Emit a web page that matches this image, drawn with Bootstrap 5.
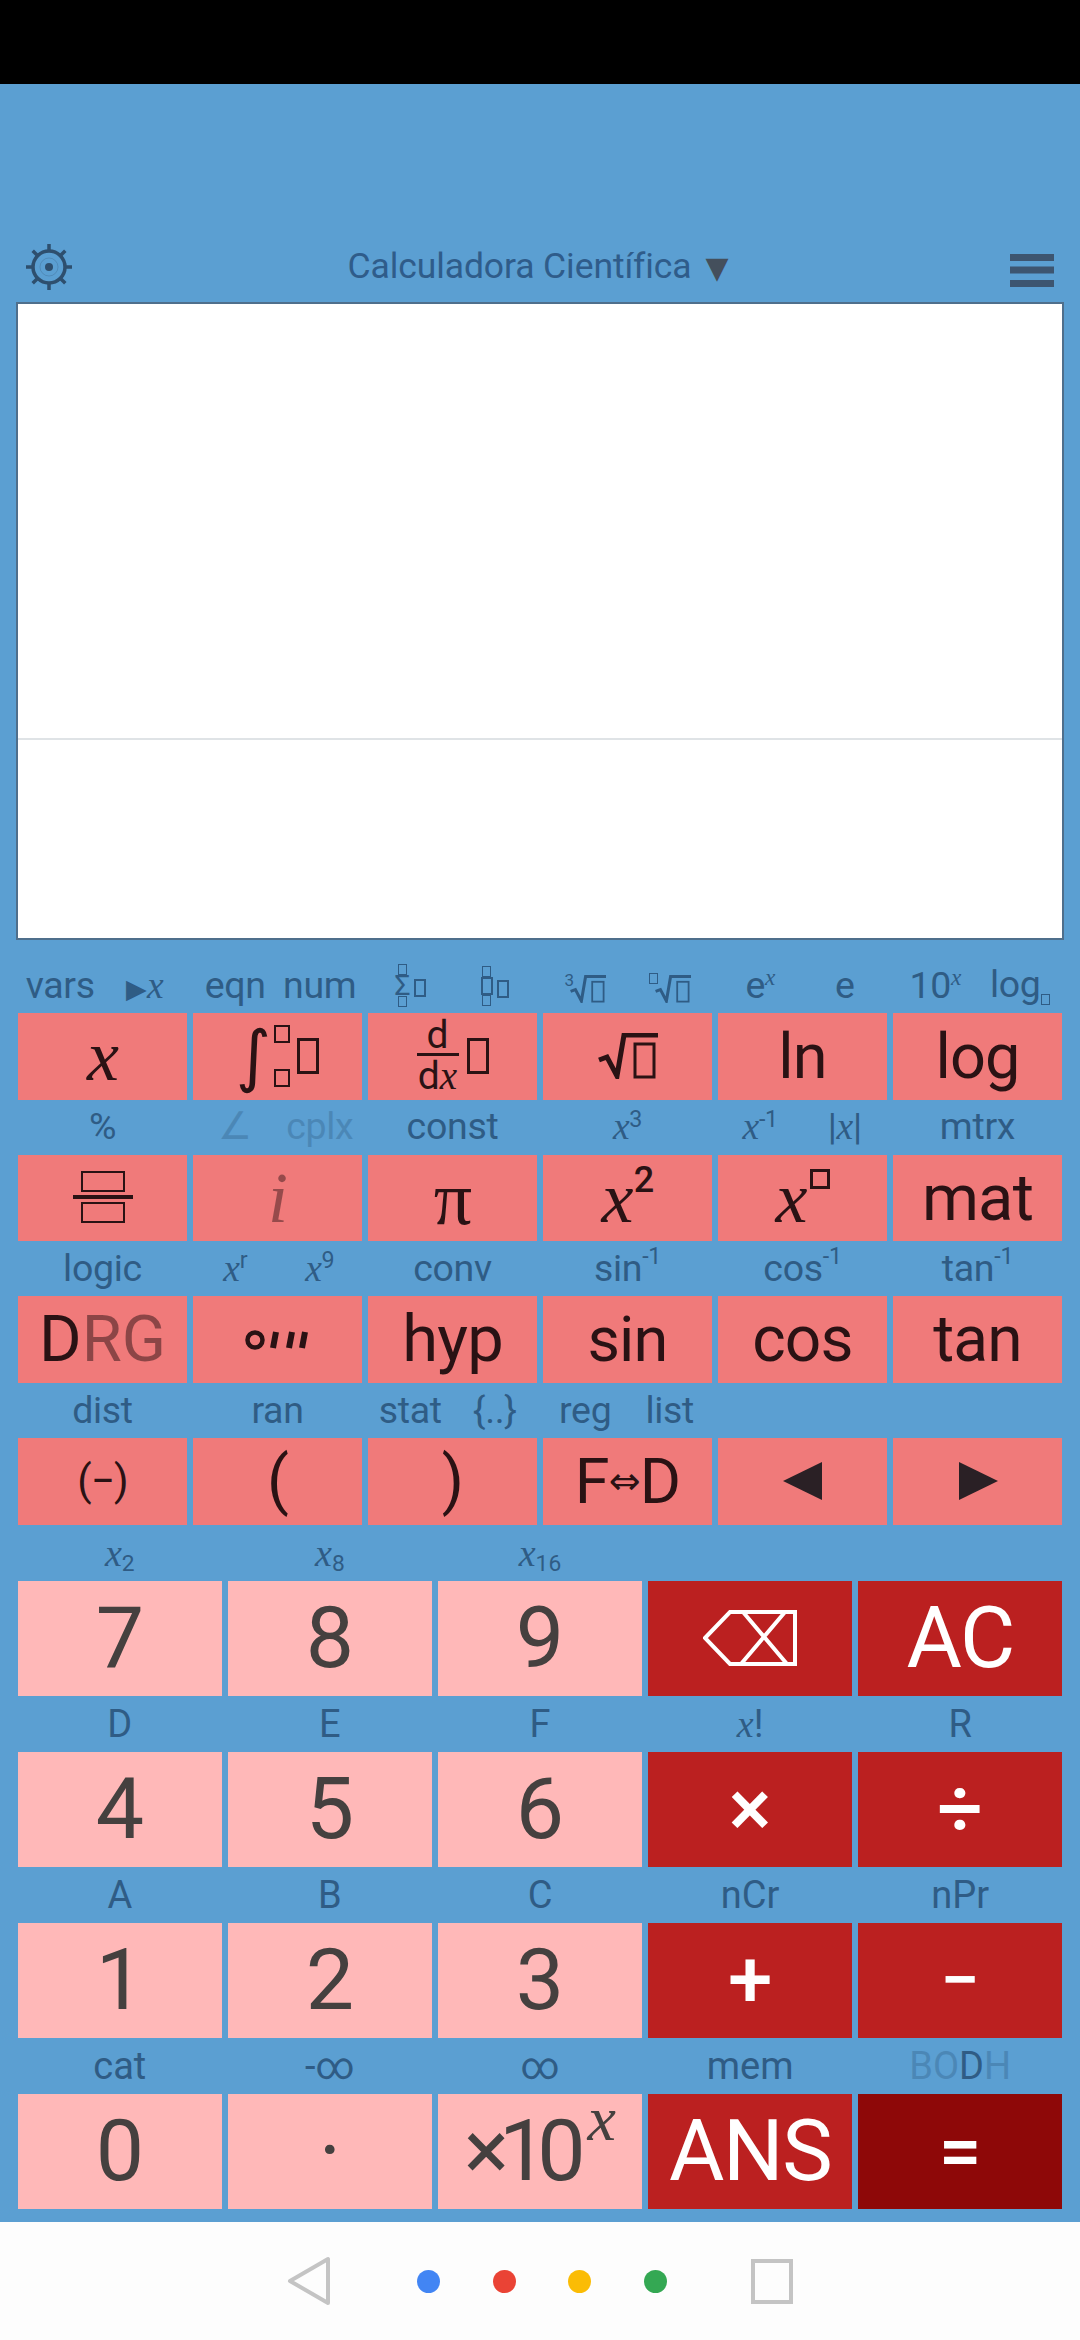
<!DOCTYPE html>
<html lang="es">
<head>
<meta charset="utf-8">
<title>Calculadora Científica</title>
<link rel="stylesheet" href="https://cdn.jsdelivr.net/npm/bootstrap@5.3.0/dist/css/bootstrap.min.css">
<style>
html,body{margin:0;height:2340px;background:#5b9fd2;font-family:Roboto,"Liberation Sans",sans-serif;overflow:hidden}
.app-shell{width:1080px;height:2340px}
.status-strip{height:84px;background:#000}
.blue-pane{height:2138px;background:#5b9fd2}
.head-row{height:218px;padding:0 26px 12px 26px}
.gear-ico{margin-bottom:0}
.menu-ico{margin-bottom:3px}
.app-title{color:#2f5c8a;font-size:35.5px;line-height:46px;margin:0 6px -1px 0;letter-spacing:-.1px}
.app-title b{color:#444f5c;font-weight:400;font-size:30px;font-family:"DejaVu Sans",sans-serif;margin-left:14px}
.screen{height:638px;margin:0 16px;background:#fff;border:2px solid #4f6f8c}
.screen-top{height:436px;border-bottom:2px solid #dfe3e6}
.pad-sci{margin:18px 18px 0;grid-template-columns:repeat(6,1fr);column-gap:6px}
.pad-num{margin:0 18px;grid-template-columns:repeat(5,1fr);column-gap:6.5px}
.cap-sci{height:55px;font-size:37.5px;line-height:1;color:#2f5c85;white-space:nowrap;letter-spacing:-.3px}
.cap-num{height:56px;font-size:38px;line-height:1;color:#2f5c85;white-space:nowrap}
.cap-sci span.half,.cap-num span.half{flex:1 1 0;text-align:center}
.dim{opacity:.35}
.serif-x{font-family:"Liberation Serif",serif;font-style:italic}
.cap-sci sup,.cap-num sup{font-size:.62em;top:-.55em;font-style:normal;font-family:Roboto,sans-serif}
.cap-sci sup.serif-x{font-family:"Liberation Serif",serif;font-style:italic}
.cap-num sub,.cap-sci sub{font-size:.6em;font-family:Roboto,sans-serif;font-style:normal}
.ckey{display:flex;align-items:center;justify-content:center;width:100%;border:0;border-radius:0;padding:0;line-height:1;white-space:nowrap}
.ckey:hover,.ckey:active{border:0}
.ck-fn{height:86.7px;background:#f07a7a;color:#2a1214;font-size:63px;letter-spacing:-.8px}
.ck-fn:hover,.ck-fn:active{background:#f07a7a;color:#2a1214}
.ck-dg{height:115px;background:#ffb8b8;color:#45403f;font-size:86px}
.ck-dg:hover,.ck-dg:active{background:#ffb8b8;color:#45403f}
.ck-op{height:115px;background:#bb2020;color:#fff;font-size:80px;font-weight:500}
.ck-op:hover,.ck-op:active{background:#bb2020;color:#fff}
.ck-eq{background:#8e0808}
.ck-eq:hover,.ck-eq:active{background:#8e0808}
.big-txt{font-size:85px;font-weight:400;letter-spacing:-1.5px}
.bx{display:inline-block;border:2px solid currentColor}
.bx-main{width:22px;height:36px;border-width:3px}
.bx-lab{width:12px;height:18px;vertical-align:-.05em}
.bx-sm{display:block;width:16px;height:18px;border:2px solid currentColor}
.bx-tiny{display:block;width:9px;height:11px;border:1.5px solid currentColor}
.stack{display:inline-flex;flex-direction:column;align-items:center;justify-content:center}
.stack-int{gap:26px;margin:0 7px 0 4px}
.int-sign{font-family:"DejaVu Sans",sans-serif;font-size:68px;line-height:1}
.frac-col{display:inline-flex;flex-direction:column;align-items:center;font-size:39px;line-height:.85;letter-spacing:0}
.frac-bar{width:42px;height:3px;background:currentColor;margin:1px 0 3px}
.frac-sym{width:60px;height:54px}
.frac-sym i{display:block;width:44px;height:21px;border:2px solid currentColor;margin:0 auto}
.frac-sym u{display:block;height:4px;background:currentColor;margin:3px 0 3px}
.nav-strip{height:118px;background:#fdfdfd}
.nav-dot{width:23px;height:23px;border-radius:50%}
.pow{font-size:36px;position:relative;top:-18px;font-family:Roboto,sans-serif;margin-left:1px;font-weight:500}
.tiny-sup{font-size:17px;position:relative;top:-12px;margin-right:-4px;font-family:Roboto,sans-serif}
.root-lab{vertical-align:-5px;margin-right:0}
</style>
</head>
<body>
<svg width="0" height="0" class="position-absolute">
  <symbol id="radical-mark" viewBox="0 0 60 46"><path d="M1 27l8-3 10 19 7-41h34" fill="none" stroke="currentColor" stroke-width="5"/><rect x="37" y="11" width="19" height="33" fill="none" stroke="currentColor" stroke-width="3"/></symbol>
</svg>
<div class="app-shell d-flex flex-column">
  <div class="status-strip"></div>
  <main class="blue-pane">
    <div class="head-row d-flex align-items-end justify-content-between">
      <svg class="gear-ico" width="46" height="46" viewBox="0 0 46 46" fill="none" stroke="#2e4f6e">
        <circle cx="23" cy="23" r="16" stroke-width="3.5"/>
        <circle cx="23" cy="23" r="9" stroke-width="1" opacity=".25"/>
        <circle cx="23" cy="23" r="4" fill="#2e4f6e" stroke="none"/>
        <path d="M23 0v6M23 40v6M0 23h6M40 23h6M6.7 6.7l4.3 4.3M35 35l4.3 4.3M39.3 6.7L35 11M11 35l-4.3 4.3" stroke-width="3.5"/>
      </svg>
      <div class="app-title">Calculadora Científica<b>▼</b></div>
      <svg class="menu-ico" width="44" height="33" viewBox="0 0 44 33" fill="#3d5570">
        <rect y="0" width="44" height="7"/><rect y="12.5" width="44" height="7"/><rect y="26" width="44" height="7"/>
      </svg>
    </div>
    <section class="screen"><div class="screen-top"></div></section>

    <div class="pad-sci d-grid">
      <div><div class="cap-sci d-flex align-items-center"><span class="half"><span>vars</span></span><span class="half"><span style="font-size:.72em">▶</span><span class="serif-x">x</span></span></div><button class="ckey btn ck-fn"><span class="serif-x" style="font-size:72px">x</span></button></div>
      <div><div class="cap-sci d-flex align-items-center"><span class="half">eqn</span><span class="half">num</span></div><button class="ckey btn ck-fn"><span class="int-sign">∫</span><span class="stack stack-int"><span class="bx-sm"></span><span class="bx-sm"></span></span><span class="bx bx-main"></span></button></div>
      <div><div class="cap-sci d-flex align-items-center"><span class="half"><span class="stack" style="vertical-align:middle"><span class="bx-tiny"></span><span style="font-size:28px;line-height:.75">Σ</span><span class="bx-tiny"></span></span><span class="bx bx-lab ms-1"></span></span><span class="half"><span class="stack" style="vertical-align:middle"><span class="bx-tiny"></span><span class="bx bx-lab"></span><span class="bx-tiny"></span></span><span class="bx bx-lab ms-1"></span></span></div><button class="ckey btn ck-fn"><span class="frac-col"><span>d</span><span class="frac-bar"></span><span>d<span class="serif-x">x</span></span></span><span class="bx bx-main ms-2"></span></button></div>
      <div><div class="cap-sci d-flex align-items-center"><span class="half"><span class="tiny-sup">3</span><svg class="root-lab" width="36" height="28"><use href="#radical-mark"/></svg></span><span class="half"><span class="bx-tiny d-inline-block" style="position:relative;top:-14px;margin-right:-3px"></span><svg class="root-lab" width="36" height="28"><use href="#radical-mark"/></svg></span></div><button class="ckey btn ck-fn"><svg width="60" height="46"><use href="#radical-mark"/></svg></button></div>
      <div><div class="cap-sci d-flex align-items-center"><span class="half">e<sup class="serif-x">x</sup></span><span class="half">e</span></div><button class="ckey btn ck-fn">ln</button></div>
      <div><div class="cap-sci d-flex align-items-center"><span class="half">10<sup class="serif-x">x</sup></span><span class="half">log<span class="bx" style="width:9px;height:11px;border-width:1.5px;vertical-align:-.2em"></span></span></div><button class="ckey btn ck-fn">log</button></div>

      <div><div class="cap-sci d-flex align-items-center justify-content-center">%</div><button class="ckey btn ck-fn"><span class="frac-sym"><i></i><u></u><i></i></span></button></div>
      <div><div class="cap-sci d-flex align-items-center"><span class="half dim">∠</span><span class="half dim">cplx</span></div><button class="ckey btn ck-fn"><span class="serif-x" style="font-size:72px;opacity:.45">i</span></button></div>
      <div><div class="cap-sci d-flex align-items-center justify-content-center">const</div><button class="ckey btn ck-fn"><span style="font-family:'Liberation Serif',serif;font-size:76px">π</span></button></div>
      <div><div class="cap-sci d-flex align-items-center justify-content-center"><span class="serif-x">x<sup>3</sup></span></div><button class="ckey btn ck-fn"><span class="serif-x" style="font-size:72px">x</span><span class="pow">2</span></button></div>
      <div><div class="cap-sci d-flex align-items-center"><span class="half"><span class="serif-x">x<sup>-1</sup></span></span><span class="half">|<span class="serif-x">x</span>|</span></div><button class="ckey btn ck-fn"><span class="serif-x" style="font-size:72px">x</span><span class="bx" style="width:20px;height:20px;border-width:3px;position:relative;top:-19px;margin-left:3px"></span></button></div>
      <div><div class="cap-sci d-flex align-items-center justify-content-center">mtrx</div><button class="ckey btn ck-fn" style="font-size:65px">mat</button></div>

      <div><div class="cap-sci d-flex align-items-center justify-content-center">logic</div><button class="ckey btn ck-fn" style="font-size:65px;letter-spacing:0">D<span style="opacity:.5">RG</span></button></div>
      <div><div class="cap-sci d-flex align-items-center"><span class="half"><span class="serif-x">x<sup>r</sup></span></span><span class="half"><span class="serif-x">x<sup>9</sup></span></span></div><button class="ckey btn ck-fn"><svg width="66" height="24" viewBox="0 0 66 24" fill="none" stroke="#2a1214"><circle cx="10" cy="12" r="7.5" stroke-width="4.5"/><path d="M31 4l-3 16M47 4l-3 16M60 4l-3 16" stroke-width="6"/></svg></button></div>
      <div><div class="cap-sci d-flex align-items-center justify-content-center">conv</div><button class="ckey btn ck-fn" style="font-size:65px">hyp</button></div>
      <div><div class="cap-sci d-flex align-items-center justify-content-center">sin<sup>-1</sup></div><button class="ckey btn ck-fn">sin</button></div>
      <div><div class="cap-sci d-flex align-items-center justify-content-center">cos<sup>-1</sup></div><button class="ckey btn ck-fn" style="font-size:64px">cos</button></div>
      <div><div class="cap-sci d-flex align-items-center justify-content-center">tan<sup>-1</sup></div><button class="ckey btn ck-fn" style="font-size:64px">tan</button></div>

      <div><div class="cap-sci d-flex align-items-center justify-content-center">dist</div><button class="ckey btn ck-fn" style="font-size:42px">(−)</button></div>
      <div><div class="cap-sci d-flex align-items-center justify-content-center">ran</div><button class="ckey btn ck-fn" style="font-size:64px">(</button></div>
      <div><div class="cap-sci d-flex align-items-center"><span class="half">stat</span><span class="half">{..}</span></div><button class="ckey btn ck-fn" style="font-size:64px">)</button></div>
      <div><div class="cap-sci d-flex align-items-center"><span class="half">reg</span><span class="half">list</span></div><button class="ckey btn ck-fn">F<span style="font-family:'DejaVu Sans',sans-serif;font-size:38px">⇔</span>D</button></div>
      <div><div class="cap-sci"></div><button class="ckey btn ck-fn"><svg width="40" height="38" viewBox="0 0 40 38" fill="#2a2025"><path d="M0 19L39 0v38z"/></svg></button></div>
      <div><div class="cap-sci"></div><button class="ckey btn ck-fn"><svg width="40" height="38" viewBox="0 0 40 38" fill="#2a2025"><path d="M1 0l39 19L1 38z"/></svg></button></div>
    </div>

    <div class="pad-num d-grid">
      <div><div class="cap-num d-flex align-items-center justify-content-center"><span class="serif-x">x<sub>2</sub></span></div><button class="ckey btn ck-dg">7</button></div>
      <div><div class="cap-num d-flex align-items-center justify-content-center"><span class="serif-x">x<sub>8</sub></span></div><button class="ckey btn ck-dg">8</button></div>
      <div><div class="cap-num d-flex align-items-center justify-content-center"><span class="serif-x">x<sub>16</sub></span></div><button class="ckey btn ck-dg">9</button></div>
      <div><div class="cap-num"></div><button class="ckey btn ck-op"><svg width="94" height="56" viewBox="0 0 94 56" fill="none" stroke="#fff" stroke-width="4"><path d="M2 28L27 2h65v52H27z"/><path d="M40 2l44 52M82 2L38 54"/></svg></button></div>
      <div><div class="cap-num"></div><button class="ckey btn ck-op big-txt">AC</button></div>

      <div><div class="cap-num d-flex align-items-center justify-content-center">D</div><button class="ckey btn ck-dg">4</button></div>
      <div><div class="cap-num d-flex align-items-center justify-content-center">E</div><button class="ckey btn ck-dg">5</button></div>
      <div><div class="cap-num d-flex align-items-center justify-content-center">F</div><button class="ckey btn ck-dg">6</button></div>
      <div><div class="cap-num d-flex align-items-center justify-content-center"><span class="serif-x">x</span>!</div><button class="ckey btn ck-op">×</button></div>
      <div><div class="cap-num d-flex align-items-center justify-content-center">R</div><button class="ckey btn ck-op">÷</button></div>

      <div><div class="cap-num d-flex align-items-center justify-content-center">A</div><button class="ckey btn ck-dg">1</button></div>
      <div><div class="cap-num d-flex align-items-center justify-content-center">B</div><button class="ckey btn ck-dg">2</button></div>
      <div><div class="cap-num d-flex align-items-center justify-content-center">C</div><button class="ckey btn ck-dg">3</button></div>
      <div><div class="cap-num d-flex align-items-center justify-content-center">nCr</div><button class="ckey btn ck-op">+</button></div>
      <div><div class="cap-num d-flex align-items-center justify-content-center">nPr</div><button class="ckey btn ck-op" style="font-size:70px">−</button></div>

      <div><div class="cap-num d-flex align-items-center justify-content-center">cat</div><button class="ckey btn ck-dg">0</button></div>
      <div><div class="cap-num d-flex align-items-center justify-content-center">-∞</div><button class="ckey btn ck-dg">·</button></div>
      <div><div class="cap-num d-flex align-items-center justify-content-center">∞</div><button class="ckey btn ck-dg" style="letter-spacing:-10px"><span style="font-size:84px">×</span>10<span class="serif-x" style="font-size:64px;letter-spacing:0;position:relative;top:-32px;margin-left:12px">x</span></button></div>
      <div><div class="cap-num d-flex align-items-center justify-content-center">mem</div><button class="ckey btn ck-op big-txt">ANS</button></div>
      <div><div class="cap-num d-flex align-items-center justify-content-center"><span class="dim">BO</span>D<span class="dim">H</span></div><button class="ckey btn ck-op ck-eq" style="font-size:76px">=</button></div>
    </div>
  </main>
  <nav class="nav-strip d-flex align-items-center justify-content-center">
    <svg width="44" height="50" viewBox="0 0 44 50" fill="none" stroke="#c4c4c4" stroke-width="4" stroke-linejoin="round"><path d="M41 3v44L3 25z"/></svg>
    <div class="d-flex" style="gap:52.5px;margin:0 84px 0 86px">
      <span class="nav-dot" style="background:#4285f4"></span>
      <span class="nav-dot" style="background:#ea4335"></span>
      <span class="nav-dot" style="background:#fbbc05"></span>
      <span class="nav-dot" style="background:#34a853"></span>
    </div>
    <svg width="42" height="45" viewBox="0 0 42 45" fill="none" stroke="#c4c4c4" stroke-width="4"><rect x="2" y="2" width="38" height="41"/></svg>
  </nav>
</div>
</body>
</html>
